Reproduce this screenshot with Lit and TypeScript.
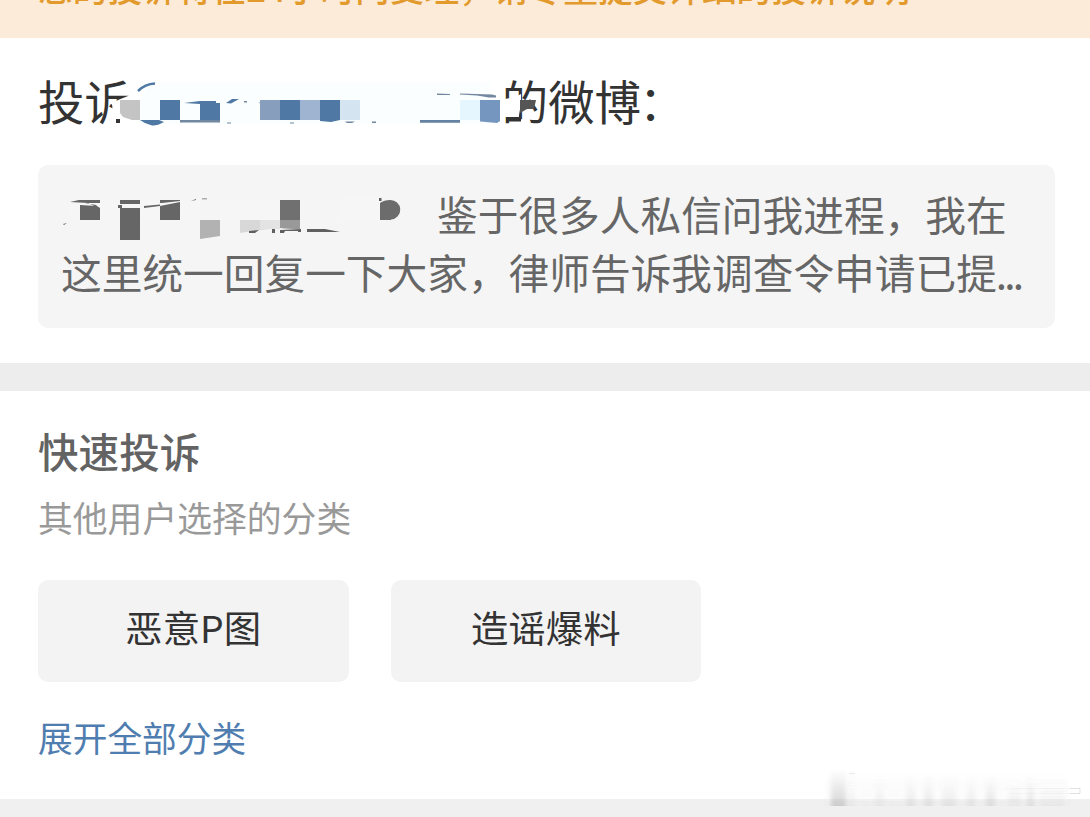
import { LitElement, html, svg, css } from 'lit';
import { customElement, property } from 'lit/decorators.js';

@customElement('complaint-title')
class ComplaintTitle extends LitElement {
  static styles = css`
    :host {
      display: block;
      position: relative;
      height: 127px;
    }
    .title {
      display: flex;
      padding: 32px 0 0 38px;
      font-size: 46.4px;
      line-height: 60px;
      color: #333;
    }
    .name {
      width: 371px;
    }
    .colon {
      margin-left: -2px;
    }
    .mosaic {
      position: absolute;
      left: 0;
      top: 0;
    }
  `;

  render() {
    return html`
      <div class="title">
        <span>投诉</span>
        <span class="name"></span>
        <span>的微博</span>
        <span class="colon">：</span>
      </div>
      <svg class="mosaic" width="700" height="127" viewBox="0 38 700 127">
        <path fill="#fff" d="M112 104L118 100L128 96L150 82L500 82V99L505 99L515 97L521 94V104L519 115V117H500V128H110L113 114Z" />
        <path fill="#fafefe" d="M150 82H490V124H140V100Z" />
        <path fill="#c4c4c4" d="M120 100H140V120H132L123 117L120 113Z" />
        <path fill="none" stroke="#4f78a5" stroke-width="2.5" d="M138 91Q145 84 155 83.500" />
        <path fill="#4f78a5" d="M140 120H159L164 122Q157 126 152 125.500Q145 124 140 120ZM160 100H180V120H160ZM184 103L200 101H216V103H220V120H200V104ZM226 103L232 99H239L231 103.500ZM280 100H300V120H280ZM320 100H340V120L331 122L320 121Z" />
        <path fill="#7288a0" d="M180 120H220V122.500H180ZM244 101h3v1.500h-3ZM258 103l4-1h8v2ZM227 122.500h4v1h-4ZM290 122.500h4v1h-4ZM345 121.500h10l-3 1.500h-5ZM372 121.500h4v1.500h-4ZM437 93.500l13 .500v1h-13ZM460 93.500l32 1 4 1v2h-7l-12-2-17-1Z" />
        <path fill="#879fbd" d="M260 100H280V120H260Z" />
        <path fill="#9fb4d1" d="M300 100H320V120H300Z" />
        <path fill="#d5e4f1" d="M340 100H360V120H340Z" />
        <path fill="#e6f6ff" d="M460 100H480V120H460Z" />
        <path fill="#6381a0" d="M420 120H460V122.700H420Z" />
        <path fill="#7597bf" d="M480 100H500V121L497 123L480 121.500Z" />
        <path fill="#555" d="M520 100H536L534 109H527L520 113Z" />
        <path fill="#333" d="M506 117.500H521V121.500H506ZM116 119h4v4h-4Z" />
      </svg>
    `;
  }
}

@customElement('complaint-quote')
class ComplaintQuote extends LitElement {
  static styles = css`
    :host {
      display: block;
      position: relative;
      box-sizing: border-box;
      height: 163px;
      margin: 0 35px 0 38px;
      padding: 20px 0 0 23px;
      border-radius: 10px;
      background: #f5f5f5;
      color: #666;
      font-size: 40.7px;
      line-height: 58px;
      white-space: nowrap;
    }
    .line {
      display: flex;
    }
    .redacted {
      width: 376px;
      height: 58px;
    }
    .dots {
      letter-spacing: -2.8px;
      margin-left: -1px;
    }
  `;

  render() {
    return html`
      <div class="line">
        <svg class="redacted" viewBox="61 185 376 58">
          <path fill="#f6f6f6" d="M70 200H200V220H70ZM220 200H300V220H220ZM340 198H380V220H340Z" />
          <path fill="#666" d="M80 205L97 206L100 208V220H80ZM120 208H140V240H120ZM160 206L180 202V220H160ZM70 202L79 200H100V203H85L96 205L99 208L88 203ZM118 205H122V208H118ZM120 200H140V204H120ZM144 206L160 204.500V206L144 208ZM160 200H180V201L162 203H160ZM191 201l5-2v1ZM202 198.500h5v.800h-5ZM63 224l4-1-3 2Z" />
          <path fill="#b2b2b2" d="M200 220H220V236L200 239Z" />
          <path fill="#d8d8d8" d="M240 220H280V228L260 230L240 233Z" />
          <path fill="#e3e3e3" d="M260 220H280V229H260Z" />
          <path fill="#707070" d="M280 200H300V229L280 228Z" />
          <path fill="#999" d="M280 220H300V229L280 228Z" />
          <path fill="#606060" d="M249 231l10-1-4 3h-6ZM272 229h3v4h-3ZM280 230l21-1v3h-3v-1h-13l-1 2h-4ZM307 229H325L340 232H307ZM379 198h2.500v3H379Z" />
          <path fill="#6c6c6c" d="M380 203Q384 200 390 200A9.500 9.500 0 0 1 391 219.500V220H380Z" />
        </svg>
        <span>鉴于很多人私信问我进程，我在</span>
      </div>
      <div class="line">
        <span>这里统一回复一下大家，律师告诉我调查令申请已提</span>
        <span class="dots">...</span>
      </div>
    `;
  }
}

@customElement('quick-complaint')
class QuickComplaint extends LitElement {
  @property({ type: Array }) categories: string[] = [];

  static styles = css`
    :host {
      display: flex;
      flex-direction: column;
      box-sizing: border-box;
      height: 408px;
      padding: 32px 38px 0;
      background: #fff;
    }
    .heading {
      font-size: 40.6px;
      line-height: 56px;
      font-weight: 500;
      color: #636363;
    }
    .hint {
      margin-top: 13px;
      font-size: 34.8px;
      line-height: 50px;
      color: #999;
    }
    .categories {
      display: flex;
      gap: 42px;
      margin-top: 38px;
    }
    .category {
      width: 310.5px;
      height: 102px;
      padding: 0 0 8px;
      border: 0;
      border-radius: 10px;
      background: #f3f3f3;
      color: #333;
      font: inherit;
      font-size: 37.4px;
      line-height: 56px;
    }
    .expand {
      margin-top: 30px;
      font-size: 34.7px;
      line-height: 50px;
      color: #507daf;
    }
  `;

  render() {
    return html`
      <div class="heading">快速投诉</div>
      <div class="hint">其他用户选择的分类</div>
      <div class="categories">
        ${this.categories.map(name => html`<button class="category">${name}</button>`)}
      </div>
      <div class="expand">展开全部分类</div>
    `;
  }
}

@customElement('app-root')
class AppRoot extends LitElement {
  static styles = css`
    :host {
      display: flex;
      flex-direction: column;
      position: relative;
      width: 1090px;
      height: 817px;
      overflow: hidden;
      background: #f0f0f0;
      font-family: 'Noto Sans CJK SC', sans-serif;
    }
    .banner {
      display: flex;
      align-items: flex-end;
      box-sizing: border-box;
      height: 38px;
      padding: 0 38px 26px;
      overflow: hidden;
      background: #fdebd9;
      color: #e39a2d;
      font-size: 34.7px;
      font-weight: 500;
      line-height: 50px;
      white-space: nowrap;
    }
    .post {
      height: 325px;
      background: #fff;
    }
    .divider {
      height: 28px;
      background: #ededed;
    }
    .watermark {
      position: absolute;
      right: 0;
      bottom: 0;
    }
  `;

  // faded vertical strokes: x, width, top, opacity
  private strokes = [
    [831, 15, 770, 0.22],
    [848, 7, 770, 0.05],
    [875, 9, 775, 0.06],
    [906, 9, 775, 0.09],
    [924, 9, 775, 0.1],
    [942, 14, 775, 0.08],
    [967, 8, 775, 0.08],
    [986, 9, 775, 0.12],
    [1008, 13, 778, 0.05],
    [1027, 7, 775, 0.12],
    [1040, 25, 778, 0.04]
  ];

  render() {
    return html`
      <div class="banner">您的投诉将在24小时内受理，请尽量提交详细的投诉说明</div>
      <div class="post">
        <complaint-title></complaint-title>
        <complaint-quote></complaint-quote>
      </div>
      <div class="divider"></div>
      <quick-complaint .categories=${['恶意P图', '造谣爆料']}></quick-complaint>
      <svg class="watermark" width="290" height="67" viewBox="800 750 290 67">
        <defs>
          <linearGradient id="fade" x1="0" y1="0" x2="0" y2="1">
            <stop offset="0" stop-color="#555" stop-opacity="0" />
            <stop offset="1" stop-color="#555" />
          </linearGradient>
          <filter id="soft" x="-5%" y="-5%" width="110%" height="110%">
            <feGaussianBlur stdDeviation="2.2 0.4" />
          </filter>
        </defs>
        <rect x="826" y="799" width="242" height="7" fill="#f4f4f4" />
        <g filter="url(#soft)">
          <rect x="826" y="772" width="242" height="34" fill="url(#fade)" opacity="0.03" />
          ${this.strokes.map(([x, w, y, o]) => svg`
            <rect x=${x} y=${y} width=${w} height=${806 - y} fill="url(#fade)" opacity=${o} />
          `)}
        </g>
        <path d="M849 773.500H855" stroke="#777" stroke-opacity="0.15" />
        <path d="M1010 788.500H1070M1010 793.500H1070" stroke="#777" stroke-opacity="0.05" />
        <path d="M1070 788.500H1080V793.500H1070" fill="none" stroke="#777" stroke-opacity="0.22" />
      </svg>
    `;
  }
}
